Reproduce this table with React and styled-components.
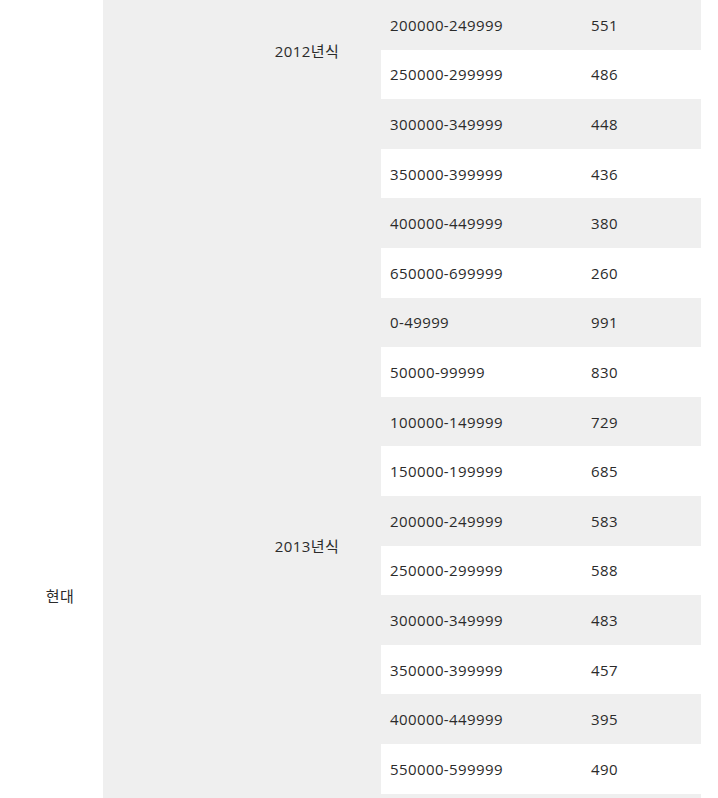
import styled, { createGlobalStyle } from 'styled-components';

const rows2012 = [
  ['200000-249999', '551'],
  ['250000-299999', '486'],
  ['300000-349999', '448'],
  ['350000-399999', '436'],
  ['400000-449999', '380'],
  ['650000-699999', '260'],
];

const rows2013 = [
  ['0-49999', '991'],
  ['50000-99999', '830'],
  ['100000-149999', '729'],
  ['150000-199999', '685'],
  ['200000-249999', '583'],
  ['250000-299999', '588'],
  ['300000-349999', '483'],
  ['350000-399999', '457'],
  ['400000-449999', '395'],
  ['550000-599999', '490'],
];

// 2012년식은 윗부분이 스크롤로 가려진 상태, 다음 그룹은 첫 줄만 살짝 보임
const groups = [
  { year: '2012년식', rows: rows2012, offset: 40 },
  { year: '2013년식', rows: rows2013 },
  { year: '', rows: [['', '']] },
];

const totalRows = groups.reduce((n, g) => n + g.rows.length, 0);

const widths = [86, 130, 148, 201, 119];

function App() {
  let rowIndex = 0;

  return (
    <>
      <GlobalStyle />
      <Viewport>
        <Table>
          <colgroup>
            {widths.map((w, i) => (
              <Col key={i} $w={w} />
            ))}
          </colgroup>
          <tbody>
            {groups.map((group, g) =>
              group.rows.map(([range, count], i) => {
                const index = rowIndex++;
                return (
                  <Row key={g + '-' + i} $shade={index % 2 === 0}>
                    {index === 0 && (
                      <>
                        <MakerCell rowSpan={totalRows}>현대</MakerCell>
                        <ModelCell rowSpan={totalRows} />
                      </>
                    )}
                    {i === 0 && (
                      <YearCell rowSpan={group.rows.length} $offset={group.offset}>
                        {group.year}
                      </YearCell>
                    )}
                    <DataCell>{range}</DataCell>
                    <DataCell>{count}</DataCell>
                  </Row>
                );
              })
            )}
          </tbody>
        </Table>
      </Viewport>
    </>
  );
}

export default App;

// ---------------- styled components ----------------

const GlobalStyle = createGlobalStyle`
  html, body {
    margin: 0;
    padding: 0;
    background: #fff;
  }
  body {
    font-family: 'Open Sans', 'Noto Sans CJK KR', sans-serif;
    color: #2b2b2b;
  }
`;

const Viewport = styled.div`
  height: 100vh;
  overflow: hidden;
`;

const Table = styled.table`
  margin-left: 17px;
  width: 684px;
  border-collapse: collapse;
  table-layout: fixed;
  font-size: 15px;
  letter-spacing: 0.4px;
`;

const Col = styled.col`
  width: ${(p) => p.$w}px;
`;

const Row = styled.tr`
  height: 49.6px;
  background: ${(p) => (p.$shade ? '#efefef' : '#fff')};
`;

const MakerCell = styled.td`
  background: #fff;
  text-align: center;
  vertical-align: top;
  padding: 585px 0 0;
`;

const ModelCell = styled.td`
  background: #efefef;
  padding: 0;
`;

const YearCell = styled.td`
  background: #efefef;
  text-align: center;
  vertical-align: ${(p) => (p.$offset ? 'top' : 'middle')};
  padding: ${(p) => (p.$offset ? `${p.$offset}px 0 0` : '0')};
`;

const DataCell = styled.td`
  padding: 0 9px;
  text-align: left;
  vertical-align: middle;
  white-space: nowrap;
`;
